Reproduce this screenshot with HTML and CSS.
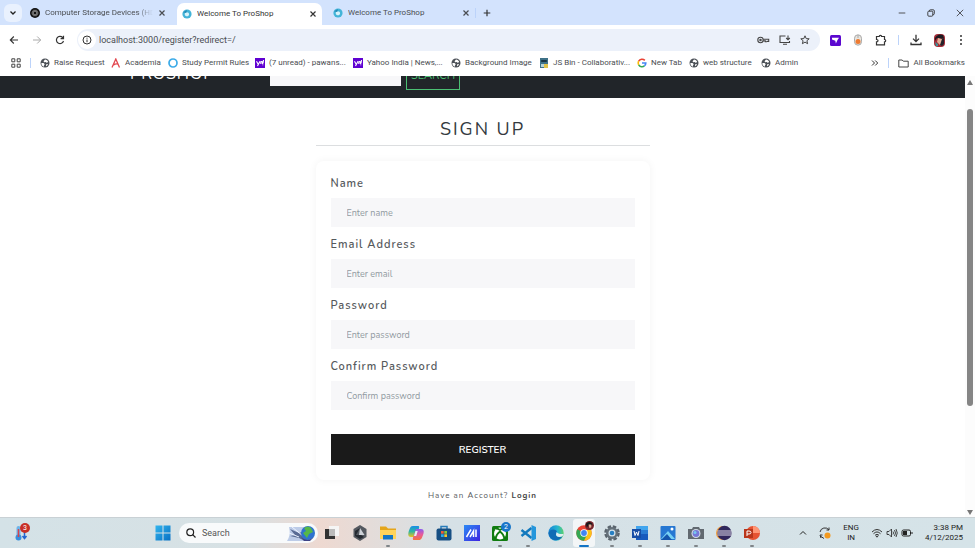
FILE: index.html
```html
<!DOCTYPE html>
<html lang="en">
<head>
<meta charset="utf-8">
<title>Welcome To ProShop</title>
<link rel="stylesheet" href="styles.css">
</head>
<body>
<svg class="defs" width="0" height="0" aria-hidden="true">
  <defs>
    <linearGradient id="win" x1="0" y1="0" x2="1" y2="1"><stop stop-color="#32b5ee"/><stop offset="1" stop-color="#0870c4"/></linearGradient>
    <linearGradient id="copilotA" x1="0" y1="0" x2="0" y2="1"><stop stop-color="#178de8"/><stop offset=".5" stop-color="#31b7a0"/><stop offset="1" stop-color="#f0c419"/></linearGradient>
    <linearGradient id="copilotB" x1="0" y1="0" x2="0" y2="1"><stop stop-color="#8a5cf0"/><stop offset=".5" stop-color="#e75a9b"/><stop offset="1" stop-color="#f4733e"/></linearGradient>
    <linearGradient id="edge" x1="0" y1="0" x2="1" y2="0"><stop stop-color="#1583d6"/><stop offset=".6" stop-color="#27b5cf"/><stop offset="1" stop-color="#5bd16a"/></linearGradient>
    <linearGradient id="asus" x1="0" y1="0" x2="1" y2="1"><stop stop-color="#2b8bf5"/><stop offset="1" stop-color="#3d22e0"/></linearGradient>
    <symbol id="globe" viewBox="0 0 10 10"><circle cx="5" cy="5" r="4.500" fill="#4c5157"/><path d="M1.300 5.200c1.800-.5 3 .1 3.300 1.100.2.8-.9.7-.8 2.400C2.200 8 1.300 6.800 1.300 5.200zM5 1.400c1.500.3 2.600 1 3.200 2.200L7 4.900 5.700 3.900 4.200 4.300 3.500 3.200zM6.200 6.200l1.800-.3c-.3 1.100-1 2-2 2.400z" fill="#fff"/></symbol>
    <symbol id="shop" viewBox="0 0 10 10"><circle cx="5" cy="5" r="4.600" fill="#43b4d8"/><path d="M3.200 3.800c1.500-1.200 4-.4 3.900 1.700C7 7.500 4 8 3 6.200c-.5-.9-.3-1.800.2-2.400z" fill="#d8f2fa"/><path d="M1 3.200 5 1l-.8 3z" fill="#2489b5"/></symbol>
    <symbol id="close" viewBox="0 0 8 8"><path d="m1.500 1.500 5 5m0-5-5 5" fill="none" stroke="currentColor" stroke-width="1.200"/></symbol>
    <symbol id="yahoo" viewBox="0 0 10 10"><path fill="#5f01d1" d="M0 0h10v10H0z"/><path d="m1.500 3.200 1.700 3M5 3.200 2.500 8M5.800 6V4.500c0-1.200 1.600-1.200 1.600 0V6M8.500 2 8 5.300m-.2 1.200v.7" fill="none" stroke="#fff" stroke-width="1.100"/></symbol>
  </defs>
</svg>

<header class="browser">
  <div class="tabs">
    <button class="tab-menu" aria-label="Search tabs"><svg width="8" height="8" viewBox="0 0 8 8"><path d="m1.500 2.500 2.500 2.500 2.500-2.500" fill="none" stroke="#222" stroke-width="1.300"/></svg></button>
    <div class="tab">
      <svg class="ico" viewBox="0 0 10 10"><circle cx="5" cy="5" r="5" fill="#111"/><g fill="none" stroke="#999" stroke-width=".6"><ellipse cx="5" cy="5" rx="3.200" ry="1.700"/><ellipse cx="5" cy="5" rx="3.200" ry="1.700" transform="rotate(60 5 5)"/><ellipse cx="5" cy="5" rx="3.200" ry="1.700" transform="rotate(120 5 5)"/></g></svg>
      <span class="tab-title fade">Computer Storage Devices (HD</span>
      <button class="plain" aria-label="Close tab"><svg class="x"><use href="#close"/></svg></button>
    </div>
    <div class="tab active">
      <svg class="ico"><use href="#shop"/></svg>
      <span class="tab-title">Welcome To ProShop</span>
      <button class="plain" aria-label="Close tab"><svg class="x"><use href="#close"/></svg></button>
    </div>
    <div class="tab">
      <svg class="ico"><use href="#shop"/></svg>
      <span class="tab-title">Welcome To ProShop</span>
      <button class="plain" aria-label="Close tab"><svg class="x"><use href="#close"/></svg></button>
    </div>
    <span class="sep"></span>
    <button class="plain new-tab" aria-label="New tab"><svg width="8" height="8" viewBox="0 0 8 8"><path d="M4 .7v6.600M.7 4h6.600" stroke="#333" stroke-width="1.200"/></svg></button>
    <div class="window-controls">
      <button class="plain" aria-label="Minimize"><svg width="8" height="8" viewBox="0 0 8 8"><path d="M.7 4h6.600" stroke="#444" stroke-width=".9"/></svg></button>
      <button class="plain" aria-label="Restore"><svg width="8" height="8" viewBox="0 0 8 8" fill="none" stroke="#333" stroke-width=".9"><rect x=".8" y="2.200" width="5" height="5" rx="1"/><path d="M2.400 2.200V1.800q0-1 1-1h2.800q1.100 0 1.100 1v2.800q0 1-1 1h-.5"/></svg></button>
      <button class="plain" aria-label="Close"><svg width="8" height="8" viewBox="0 0 8 8"><path d="m.8.8 6.400 6.400m0-6.400L.8 7.200" stroke="#333" stroke-width=".8"/></svg></button>
    </div>
  </div>

  <div class="toolbar">
    <div class="nav-buttons">
      <button class="plain" aria-label="Back"><svg width="10" height="10" viewBox="0 0 10 10" fill="none" stroke="#333" stroke-width="1.100"><path d="M9 5H1.500M4.800 1.500 1.300 5l3.500 3.500"/></svg></button>
      <button class="plain" aria-label="Forward"><svg width="10" height="10" viewBox="0 0 10 10" fill="none" stroke="#aaa" stroke-width="1"><path d="M1 5h7.500M5.200 1.500 8.700 5 5.200 8.500"/></svg></button>
      <button class="plain" aria-label="Reload"><svg width="10" height="10" viewBox="0 0 10 10" fill="none" stroke="#333" stroke-width="1.200"><path d="M8.500 6A3.600 3.600 0 1 1 7.600 2.500L8.300 3.300M8.500.8v2.900H5.600"/></svg></button>
    </div>
    <div class="address">
      <button class="plain site-info" aria-label="Site information"><svg width="10" height="10" viewBox="0 0 10 10" fill="none" stroke="#333"><circle cx="5" cy="5" r="4"/><path d="M5 4.500v2.700M5 2.700v1"/></svg></button>
      <input type="text" aria-label="Address" value="localhost:3000/register?redirect=/">
      <svg width="13" height="10" viewBox="0 0 13 10" fill="none" stroke="#444" stroke-width="1.100"><circle cx="3.500" cy="5" r="2.700"/><circle cx="3.500" cy="5" r=".7"/><path d="M6.200 4.300h5.500v2.200h-1.400v-.8M6.200 5.900h2.100v.8h1.500"/></svg>
      <svg width="12" height="10" viewBox="0 0 12 10" fill="none" stroke="#444" stroke-width="1.100"><path d="M6.500 1H1v6.500h9.500V6M4 9.200h4M9 .5v4M7.200 3 9 4.800 10.800 3"/></svg>
      <svg width="10" height="10" viewBox="0 0 10 10" fill="none" stroke="#444" stroke-width="1"><path d="m5 .8 1.200 2.800 3 .2L6.900 5.700l.7 3L5 7.100 2.400 8.700l.7-3L.8 3.800l3-.2z"/></svg>
    </div>
    <div class="extensions">
      <svg width="11" height="11" viewBox="0 0 11 11"><rect width="11" height="11" rx="1.500" fill="#5b08cf"/><path d="M2 2.700h7L7.500 5 5.900 8.500 5.300 5.700 2 4.500z" fill="#fff"/></svg>
      <svg width="10" height="12" viewBox="0 0 10 12"><rect x="1.500" y=".8" width="7" height="10.400" rx="3.500" fill="#e8e5df" stroke="#aaa"/><circle cx="5" cy="7.500" r="2.500" fill="#ef7b32"/><path d="M5 1v3" stroke="#aaa"/></svg>
      <svg width="12" height="12" viewBox="0 0 12 12" fill="none" stroke="#333" stroke-width="1.200"><path d="M1.500 2.500h2.700a1.200 1.200 0 0 1 2.400 0h2.900v3a1.200 1.200 0 0 1 0 2.400v3h-8v-3c2 0 2-2.400 0-2.400z"/></svg>
      <span class="sep"></span>
      <svg width="12" height="12" viewBox="0 0 12 12" fill="none" stroke="#333" stroke-width="1.300"><path d="M6 .8v6.500M3 4.600l3 3 3-3M1 8.500v2h10v-2"/></svg>
      <svg width="11" height="13" viewBox="0 0 11 13"><rect width="11" height="13" rx="4" fill="#a32c37"/><path d="M1 4q3-5 8-3l1 3-3 1-4-1-2 3z" fill="#1d1b22"/><path d="m4 4 4 1v4L6 11 3 8z" fill="#e2ae96"/><path d="m8 5 2-1v6L8 12 6 11z" fill="#23222a"/><path d="m1 8 3 2v2H2z" fill="#3d9298"/></svg>
      <svg width="4" height="12" viewBox="0 0 4 12" fill="#333"><circle cx="2" cy="2" r="1"/><circle cx="2" cy="6" r="1"/><circle cx="2" cy="10" r="1"/></svg>
    </div>
  </div>

  <nav class="bookmarks" aria-label="Bookmarks">
    <svg class="ico" viewBox="0 0 10 10" fill="none" stroke="#444"><path d="M.8.8h3v3h-3zM6.200.8h3v3h-3zM.8 6.200h3v3h-3zM6.200 6.200h3v3h-3z"/></svg>
    <span class="sep"></span>
    <div class="links">
      <a href="#"><svg class="ico"><use href="#globe"/></svg>Raise Request</a>
      <a href="#"><svg class="ico" viewBox="0 0 10 10" fill="none" stroke="#e2474f" stroke-width="1.300"><path d="M1 9.500 4.800 1l3.700 8.500M2.500 7q2-1.500 4.500-1"/></svg>Academia</a>
      <a href="#"><svg class="ico" viewBox="0 0 10 10"><circle cx="5" cy="5" r="4" fill="none" stroke="#3cabe8" stroke-width="1.700"/></svg>Study Permit Rules</a>
      <a href="#"><svg class="ico"><use href="#yahoo"/></svg>(7 unread) - pawans...</a>
      <a href="#"><svg class="ico"><use href="#yahoo"/></svg>Yahoo India | News,...</a>
      <a href="#"><svg class="ico"><use href="#globe"/></svg>Background Image</a>
      <a href="#"><svg class="ico" viewBox="0 0 10 10"><path fill="#3e7187" d="M1 0h8v10H1z"/><path d="M2.200 2h5.600v2H2.200z" fill="#193544"/><path d="M2 6h3v3H2z" fill="#b7d3d5"/><path d="M5 6h4v4H5z" fill="#e0c34a"/></svg>JS Bin - Collaborativ...</a>
      <a href="#"><svg class="ico" viewBox="0 0 10 10" fill="none" stroke-width="1.600"><path d="M7.800 2.400A3.800 3.800 0 0 0 1.700 3.200" stroke="#ea4335"/><path d="M1.700 3.200a3.800 3.800 0 0 0 0 3.600" stroke="#fbbc05"/><path d="M1.700 6.800a3.800 3.800 0 0 0 5.700 1.100" stroke="#34a853"/><path d="M7.400 7.900A3.700 3.700 0 0 0 8.800 5H5" stroke="#4285f4"/></svg>New Tab</a>
      <a href="#"><svg class="ico"><use href="#globe"/></svg>web structure</a>
      <a href="#"><svg class="ico"><use href="#globe"/></svg>Admin</a>
    </div>
    <button class="plain" aria-label="More bookmarks"><svg width="8" height="8" viewBox="0 0 8 8" fill="none" stroke="#333"><path d="m1 1.500 2.500 2.500L1 6.500m3.200-5L6.700 4 4.200 6.500"/></svg></button>
    <span class="sep"></span>
    <a href="#" class="all"><svg width="11" height="9" viewBox="0 0 11 9" fill="none" stroke="#444"><path d="M.8 1h3.400l1.100 1.200h4.900V8H.8z"/></svg>All Bookmarks</a>
  </nav>
</header>

<div class="viewport">
  <div class="page">
    <div class="navbar">
      <a href="#" class="brand">PROSHOP</a>
      <form class="search">
        <input type="text" aria-label="Search products">
        <button type="button">SEARCH</button>
      </form>
    </div>
    <main class="signup">
      <h1>SIGN UP</h1>
      <form class="card">
        <label for="name">Name</label>
        <input id="name" type="text" placeholder="Enter name">
        <label for="email">Email Address</label>
        <input id="email" type="email" placeholder="Enter email">
        <label for="password">Password</label>
        <input id="password" type="password" placeholder="Enter password">
        <label for="confirm">Confirm Password</label>
        <input id="confirm" type="password" placeholder="Confirm password">
        <button type="button">REGISTER</button>
      </form>
      <p>Have an Account? <a href="#">Login</a></p>
    </main>
  </div>
  <div class="scrollbar" aria-hidden="true">
    <svg width="6" height="5" viewBox="0 0 6 5"><path d="m3 0 3 5H0z" fill="#777"/></svg>
    <div class="track"><div class="thumb"></div></div>
    <svg width="6" height="5" viewBox="0 0 6 5"><path d="m3 5 3-5H0z" fill="#777"/></svg>
  </div>
</div>

<footer class="taskbar">
  <button class="plain weather" aria-label="Weather"><svg width="14" height="16" viewBox="0 0 14 16"><path d="M3.500 3v8" stroke="#6db4ea" stroke-width="4" stroke-linecap="round"/><circle cx="3.500" cy="12.500" r="3" fill="#3b8fdc"/><path d="M3.500 4v8" stroke="#d8434b" stroke-width="1.500"/><path d="M9.500 6v7M7.500 11l2 2.500 2-2.500" fill="none" stroke="#2366d1" stroke-width="1.500"/></svg><span class="badge red">3</span></button>
  <button class="plain start" aria-label="Start"><svg width="16" height="16" viewBox="0 0 16 16" fill="url(#win)"><path d="M.5.5h7v7h-7zM8.500.5h7v7h-7zM.5 8.500h7v7h-7zM8.500 8.500h7v7h-7z"/></svg></button>
  <div class="task-search">
    <svg width="10" height="10" viewBox="0 0 10 10" fill="none" stroke="#222" stroke-width="1.200"><circle cx="4.200" cy="4.200" r="3.400"/><path d="m6.700 6.700 2.800 2.800"/></svg>
    <input type="text" aria-label="Search" placeholder="Search">
    <svg width="30" height="17" viewBox="0 0 30 17"><path d="M1 16Q5 10 3 2h16v14z" fill="#bdcce8"/><path d="m4 4 9 4 3-1 7 7-4 2-6-3-9-2 5-1z" fill="#596b94"/><path d="m6 2 11 9M3 8l10 4" stroke="#edf3ff"/><circle cx="22" cy="8" r="7" fill="#2f73cf"/><path d="M18 3q4-3 7 0l2 4-4 2-2 4-4-5 3-2z" fill="#55b849"/><path d="M15 12q6 6 13 0l-4 4h-6z" fill="#3d4387"/></svg>
  </div>
  <div class="apps">
    <button class="plain" aria-label="Task view"><svg viewBox="0 0 16 16"><path d="M5 1h10v10H5z" fill="#f5f5f5"/><path d="M1 4h10v10H1z" fill="#333"/><path d="M5 4h6v7H5z" fill="#bbb"/></svg></button>
    <button class="plain" aria-label="Armoury"><svg viewBox="0 0 16 16"><path d="m8 0 6.500 4v8L8 16l-6.500-4V4z" fill="#53585f"/><path d="m8 3 4.500 7H7z" fill="#ced2d8"/><path d="m8 3-4 7h5l3 2-4 2-5-3V6z" fill="#252a31"/></svg></button>
    <button class="plain open" aria-label="File Explorer"><svg viewBox="0 0 16 16"><path d="M0 1.500h6l2 2h8V14H0z" fill="#e5a51b"/><path d="M0 5h16v9H0z" fill="#ffd45a"/><path d="M3 10h10v4.500H3z" fill="#1476c4"/></svg></button>
    <button class="plain" aria-label="Copilot"><svg viewBox="0 0 16 16"><path d="M5 1h5c2 0 1 3 0 5L8 12H3C-.5 12 0 8 1 5.500 2 3 2.500 1 5 1z" fill="url(#copilotA)"/><path d="M13 4c3.500 0 3 3.500 2 6s-1.500 5-4 5H6c-2 0-1-3 0-5l2-6z" fill="url(#copilotB)"/><path d="M7.500 6h2.200l-1.500 5H6z" fill="#e7f1f5"/></svg></button>
    <button class="plain" aria-label="Store"><svg viewBox="0 0 16 16"><path d="M5 4V1.500h6V4" fill="none" stroke="#287cba" stroke-width="1.500"/><rect x=".5" y="3.500" width="15" height="12" rx="2" fill="#164f83"/><path d="M5 6h2.700v2.700H5z" fill="#f15d35"/><path d="M8.300 6H11v2.700H8.300z" fill="#8bca38"/><path d="M5 9.300h2.700V12H5z" fill="#29a9ed"/><path d="M8.300 9.300H11V12H8.300z" fill="#fac52c"/></svg></button>
    <button class="plain" aria-label="MyASUS"><svg viewBox="0 0 16 16"><path d="M0 0h16v16H0z" fill="url(#asus)"/><path d="M2.500 12 7 4.500M6 12l3.500-6v6m2.500 0V4.500" fill="none" stroke="#fff" stroke-width="1.500"/></svg></button>
    <button class="plain open" aria-label="Xbox"><svg viewBox="0 0 16 16"><rect y="1" width="16" height="15" rx="1.500" fill="#107c10"/><circle cx="8" cy="8.500" r="6" fill="#fff"/><path d="M3.500 13.500Q4.500 9 8 6.500q3.500 2.500 4.500 7M4 3.500Q6 3.500 8 5q2-1.500 4-1.500" fill="none" stroke="#107c10" stroke-width="1.800"/></svg><span class="badge blue">2</span></button>
    <button class="plain open" aria-label="Visual Studio Code"><svg viewBox="0 0 16 16"><path d="m1.500 5 10 8M1.500 11l10-8" stroke="#1279bd" stroke-width="2.400"/><path d="m11.500 0 4.500 2v12l-4.500 2z" fill="#2496dc"/></svg></button>
    <button class="plain" aria-label="Edge"><svg viewBox="0 0 16 16"><circle cx="8" cy="8" r="7.700" fill="url(#edge)"/><path d="M.5 8C2 3 9 4 9 7c0 1-1 1.500-1 2.500 0 3 4 3 6.500 1.800C11 17 2 17 .5 8z" fill="#126cb5"/><path d="M8.500 6.800Q10 9.500 15.500 9l-1 2.300c-3 1.200-6.500.7-6.500-1.800 0-1 .8-1.500.5-2.700z" fill="#e3eef0"/></svg></button>
    <button class="plain open current" aria-label="Chrome"><svg viewBox="0 0 16 16"><circle cx="8" cy="8" r="7.700" fill="#ea4335"/><path d="M8 8 1.300 4.200A7.700 7.700 0 0 0 8 15.700l3.500-6z" fill="#34a853"/><path d="M8 5h7.100A7.700 7.700 0 0 1 8 15.700l3-6z" fill="#fbc11b"/><circle cx="8" cy="8" r="3.700" fill="#fff"/><circle cx="8" cy="8" r="2.900" fill="#4285f4"/></svg><svg class="avatar" viewBox="0 0 10 10"><circle cx="5" cy="5" r="5" fill="#76252c"/><path d="M1 3Q5-1 8 3v2L5 4 2 7z" fill="#171719"/><path d="m4 4 3 0v3L5 8z" fill="#e4ab92"/></svg></button>
    <button class="plain open" aria-label="Settings"><svg viewBox="0 0 16 16"><circle cx="8" cy="8" r="6.300" fill="none" stroke="#59636c" stroke-width="3" stroke-dasharray="3.300 1.650"/><circle cx="8" cy="8" r="6" fill="#65717a"/><circle cx="8" cy="8" r="3.500" fill="#d5e3ec"/><circle cx="8" cy="8" r="2.300" fill="#277fc2"/></svg></button>
    <button class="plain open" aria-label="Word"><svg viewBox="0 0 16 16"><path d="M4 1h12v14H4z" fill="#185abd"/><path d="M4 1h12v4H4z" fill="#41a5ee"/><path d="M4 5h12v4H4z" fill="#2b7cd3"/><path d="M0 4h9v9H0z" fill="#174ea6"/><path d="m2 6 1 4.500L4.500 7 6 10.500 7 6" fill="none" stroke="#fff"/></svg></button>
    <button class="plain open" aria-label="Photos"><svg viewBox="0 0 16 16"><rect x=".5" y="1" width="15" height="14" rx="1" fill="#2677d2"/><path d="m1 14 7-8 7 8z" fill="#76d0f4"/><path d="m1 15 6-6 5 6z" fill="#1455ac"/><circle cx="12" cy="4" r="1.500" fill="#fff"/></svg></button>
    <button class="plain open" aria-label="Camera"><svg viewBox="0 0 16 16"><path d="M0 4h4l1-2h6l1 2h4v10H0z" fill="#626970"/><circle cx="8" cy="8.500" r="4.500" fill="#d3dce6"/><circle cx="8" cy="8.500" r="3.400" fill="#7678d8"/><circle cx="7" cy="7.500" r="1.500" fill="#76c8ef"/></svg></button>
    <button class="plain open" aria-label="Eclipse"><svg viewBox="0 0 16 16"><circle cx="7" cy="8" r="7" fill="#f19b38"/><circle cx="8.500" cy="8" r="7.200" fill="#30275c"/><path d="M1.500 6h14M1.300 8h14.400M1.500 10h14" stroke="#e1dde9"/></svg></button>
    <button class="plain open" aria-label="PowerPoint"><svg viewBox="0 0 16 16"><circle cx="9" cy="8" r="7" fill="#e65332"/><path d="M9 1a7 7 0 0 1 7 7H9z" fill="#ff9675"/><path d="M0 4h9v9H0z" fill="#b9361b"/><path d="M3 11V6h2q2 0 2 1.500T5 9H3" fill="none" stroke="#fff"/></svg></button>
  </div>
  <div class="tray">
    <svg width="8" height="8" viewBox="0 0 8 8" fill="none" stroke="#222"><path d="m1 5.500 3-3 3 3"/></svg>
    <svg width="12" height="12" viewBox="0 0 12 12"><path d="M1 5a5 5 0 0 1 9-2V.5M10 3H7.500M1 8l1 3m-1-3h2.500M2 9.500l3 2" fill="none" stroke="#333"/><circle cx="8.500" cy="8.500" r="3" fill="#f39a1f"/></svg>
    <span class="lang">ENG<br>IN</span>
    <div class="status">
      <svg width="12" height="10" viewBox="0 0 12 10" fill="none" stroke="#333"><path d="M1 4q5-5 10 0M2.500 5.700q3.500-3.500 7 0M4 7.300q2-2 4 0"/><circle cx="6" cy="8.500" r=".6" fill="#333"/></svg>
      <svg width="12" height="10" viewBox="0 0 12 10" fill="none" stroke="#333" stroke-width=".9"><path d="M1 3.500h2L5.500 1v8L3 6.500H1zM7 3.500q1 1.500 0 3M8.500 2q2 3 0 6M10 1q2.500 4 0 8"/></svg>
      <svg width="12" height="10" viewBox="0 0 12 10"><rect x="1" y="2" width="8.500" height="6" rx="1.500" fill="none" stroke="#222"/><path d="M2 3h4v4H2z" fill="#222"/><path d="M11 4v2" stroke="#222"/></svg>
    </div>
    <span class="clock">3:38 PM<br>4/12/2025</span>
  </div>
</footer>
</body>
</html>
```

FILE: styles.css
```css
* { box-sizing: border-box; }

body {
  margin: 0;
  height: 100vh;
  display: flex;
  flex-direction: column;
  overflow: hidden;
  background: #fff;
  color: #4a4d51;
  font: 8px/12px Roboto, "Noto Sans", sans-serif;
}

.defs { position: absolute; }
svg { display: block; flex: none; }
a { color: inherit; text-decoration: none; }
button, input { font: inherit; color: inherit; border: 0; border-radius: 0; padding: 0; margin: 0; min-width: 0; outline: 0; }
.plain { background: none; display: grid; place-items: center; flex: none; }
.ico { width: 10px; height: 10px; }
.x { width: 8px; height: 8px; }
.sep { width: 1px; height: 10px; background: #bcd3fa; flex: none; }

/* Tab strip */
.tabs { display: flex; align-items: center; height: 25px; background: #d3e3fd; padding-left: 4px; }
.tab-menu { width: 18px; height: 18px; border-radius: 6px; background: #e9f1fe; display: grid; place-items: center; }
.tab { width: 149px; height: 22px; display: flex; align-items: center; gap: 5px; padding: 0 5px 0 8px; }
.tab.active { background: #fff; border-radius: 7px 7px 0 0; align-self: flex-end; margin: 0 0 0 6px; color: #333; width: 145px; padding-left: 5px; }
.tab.active + .tab { padding-left: 11px; width: 153px; }
.tab-title { flex: 1; overflow: hidden; white-space: nowrap; }
.fade { mask-image: linear-gradient(to right, #000 85%, transparent); }
.new-tab { margin-left: 7px; }
.window-controls { margin-left: auto; display: flex; gap: 21px; padding-right: 11px; }

/* Address row */
.toolbar { height: 30px; display: flex; align-items: center; padding: 0 12px 0 9px; }
.nav-buttons { display: flex; gap: 13px; width: 68px; }
.address { flex: 1; height: 22px; display: flex; align-items: center; gap: 9px; padding: 0 10px 0 1px; border-radius: 11px; background: #ecf1fa; }
.site-info { width: 18px; height: 18px; border-radius: 50%; background: #fff; }
.address input { flex: 1; background: none; font-size: 9px; margin-left: -6px; }
.extensions { display: flex; align-items: center; gap: 12px; padding-left: 10px; }
.extensions .sep { margin: 0 -1px; }
.extensions svg:last-child { margin-left: 2px; }

/* Bookmarks */
.bookmarks { height: 21px; display: flex; align-items: center; padding: 0 10px 5px 11px; }
.bookmarks > .sep { margin: 0 9px; }
.links { flex: 1; display: grid; grid-template-columns: 71px 57px 87px 98px 98px 88px 98px 52px 72px 48px; }
.links a, .all { display: flex; align-items: center; gap: 4px; white-space: nowrap; }

/* Web page */
.viewport { flex: 1; min-height: 0; display: flex; }
.page { flex: 1; overflow: hidden; font-family: Nunito, Lato, sans-serif; }
.navbar { height: 22px; overflow: hidden; background: #212529; display: flex; align-items: flex-end; padding: 0 0 8px 130px; }
.brand { width: 140px; color: #fff; font-size: 16px; line-height: 24px; letter-spacing: 1px; padding-bottom: 4px; }
.search { display: flex; align-items: flex-end; gap: 5px; }
.search input { width: 131px; height: 28px; background: #f7f7f9; margin-bottom: 4px; }
.search button { width: 54px; height: 28px; border: 1px solid #4bbf73; background: none; color: #4bbf73; font-size: 11px; line-height: 26px; }

.signup { width: 334px; max-width: 100%; margin: 0 auto; padding-top: 17px; color: #55595c; }
h1 { margin: 0 0 15px; padding-bottom: 1px; border-bottom: 1px solid #dcdee0; color: #343a40; text-align: center; font-size: 18px; line-height: 29px; font-weight: 400; letter-spacing: 2px; }
.card { display: flex; flex-direction: column; padding: 15px; border-radius: 8px; box-shadow: 0 0 8px rgb(0 0 0 / 5%); }
.card label { font-size: 11px; line-height: 16px; font-weight: 600; letter-spacing: 1px; margin-bottom: 6px; }
.card input { height: 29px; padding: 0 16px; background: #f7f7f9; font-size: 9px; margin-bottom: 10px; }
.card input::placeholder { color: #919aa1; opacity: 1; }
.card button { height: 31px; margin-top: 14px; background: #1a1a1a; color: #fff; font-size: 10px; font-weight: 600; }
.signup p { margin: 9px 0 0; text-align: center; font-size: 8px; line-height: 14px; letter-spacing: 1px; }
.signup p a { font-weight: 700; color: #444; }

.scrollbar { width: 10px; background: #fcfcfc; display: flex; flex-direction: column; align-items: center; padding: 4px 0 2px; }
.track { flex: 1; width: 6px; padding: 24px 0 104px; }
.thumb { height: 100%; border-radius: 3px; background: #858585; }

/* Taskbar */
.taskbar { height: 31px; display: flex; align-items: center; border-top: 1px solid #c9d1d5; background: linear-gradient(90deg, #d4e2e7 0, #d7e1e4 25%, #eed9d1 33%, #e4dcd9 38%, #d6e1e6 46%, #d5e3e8 100%); }
.weather { width: 44px; height: 28px; position: relative; }
.start { margin-left: 104px; width: 29px; }
.task-search { width: 139px; height: 20px; margin-left: 2px; border-radius: 10px; background: #f8fafb; display: flex; align-items: center; gap: 6px; padding: 0 2px 0 7px; font-size: 9px; }
.task-search input { flex: 1; background: none; }
.task-search input::placeholder { color: #555; opacity: 1; }
.apps { display: grid; grid-template-columns: repeat(16, 28px); }
.apps button { height: 28px; position: relative; }
.apps svg { width: 16px; height: 16px; }
.open::after { content: ""; position: absolute; bottom: 0; left: 12px; width: 4px; height: 2px; border-radius: 1px; background: #7f8589; }
.apps .current { background: #f3f6f7; border-radius: 3px; margin: 0 3px; }
.current::after { left: 6px; width: 10px; background: #1474c4; }
.apps .avatar { position: absolute; top: 2px; right: 1px; width: 9px; height: 9px; }
.badge { position: absolute; top: 3px; right: 3px; width: 10px; height: 10px; border-radius: 50%; color: #fff; font-size: 7px; line-height: 10px; text-align: center; }
.badge.red { top: 4px; right: 14px; background: #c82f26; }
.badge.blue { background: #1976c9; }
.tray { margin-left: auto; padding-right: 12px; display: flex; align-items: center; gap: 12px; color: #222; line-height: 10px; }
.lang { text-align: center; }
.status { display: flex; gap: 3px; }
.clock { text-align: right; }
```
